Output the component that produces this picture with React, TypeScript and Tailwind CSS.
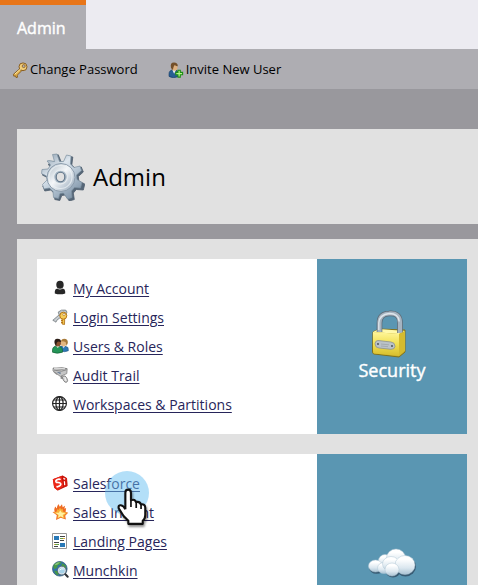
import type { ReactNode } from 'react';

function KeyIcon() {
  return (
    <svg width="16" height="16" viewBox="0 0 16 16" aria-hidden="true">
      <path d="M8.3 6.2 1.4 12.3l.4 1.9 1.7-.3.5 1.6 1.6-.3-.5-1.9 4.8-4.7z" fill="#e2b04c" stroke="#7a5015" strokeWidth=".8" />
      <ellipse cx="11" cy="4.8" rx="4" ry="3.9" fill="#f1cd78" stroke="#805317" strokeWidth=".9" />
      <circle cx="11.7" cy="4.1" r="1.5" fill="#aeadb2" stroke="#8b5d1c" strokeWidth=".8" />
      <path d="m3 12 6-5.3" stroke="#fff0b6" strokeWidth=".9" />
    </svg>
  );
}

function InviteIcon() {
  return (
    <svg width="16" height="16" viewBox="0 0 16 16" aria-hidden="true">
      <path d="M1 12q0-4 4.4-4.2 5 0 5.2 4.2v2.4Q5 17 1 14.4z" fill="#285f93" stroke="#183b63" strokeWidth=".6" />
      <path d="m4.4 8 1.7 3.8L8 8z" fill="#e8edf2" />
      <ellipse cx="6.5" cy="5" rx="3" ry="3.8" fill="#dfb17e" />
      <path d="M3 6Q1.8.6 6 .6q3.8 0 3.8 3.7Q8 4.3 6.7 3 5.5 4 4.8 8z" fill="#73502b" />
      <path d="M9 7.7h2.3v2.2h2.3v2.3h-2.3v2.4H9v-2.4H6.8V9.9H9z" transform="translate(1 .5)" fill="#b4f58a" stroke="#1d8f14" strokeWidth="1.1" />
    </svg>
  );
}

function GearIcon() {
  return (
    <svg width="44" height="48" viewBox="0 0 44 48" aria-hidden="true">
      <defs>
        <linearGradient id="gearFace" x1="0" y1="0" x2=".7" y2="1">
          <stop offset="0" stopColor="#8497a8" />
          <stop offset=".4" stopColor="#dde6ee" />
          <stop offset=".7" stopColor="#aebfce" />
          <stop offset="1" stopColor="#8296aa" />
        </linearGradient>
        <linearGradient id="gearDisc" x1="0" y1="0" x2="1" y2="1">
          <stop offset="0" stopColor="#adbac5" />
          <stop offset=".45" stopColor="#f5f7f9" />
          <stop offset="1" stopColor="#8ea2b5" />
        </linearGradient>
      </defs>
      <g strokeLinejoin="round">
        <path d="M12 1.5 16.5 1l3 7.5h4L26 2.200l5 1-1 8 3.500 3.500 6-1.500 2 5-5 4.500.500 4.500 6 3-1.500 6-7-.500-3 3.500 1 6.500-5 1.500-4-6-3.500.500-2 5-5-1-.500-6-3.500-3.500-6 1-2-5 5-4.500-.500-4-5-2.500L2 19l6-.500 2.500-4L6.500 11 9 7.500l5.500 1z" fill="#566778" stroke="#4f5e6e" strokeWidth=".8" transform="translate(.8 .8)" />
        <path d="M11.500 1.500 16 1l2.500 7.500h4L25.500 2l4.500 1-.500 8 3.500 3.500 6-1.500 1.500 4.500-5 4.500.500 4.500 5 3-1.500 5.500-6-.500-3 3.500.500 6.500-4.500 1.500-4-6-3.500.500-1.500 5-5-1-.500-6-3.500-3.500-5.500 1-1.500-4.500 4.500-4.500-.500-4-5-2.500.500-4 6-.500 2.500-4-3.500-4L8 7.500l5.500 1z" fill="url(#gearFace)" stroke="#7d90a1" strokeWidth=".7" />
      </g>
      <circle cx="20" cy="24.500" r="14" fill="url(#gearDisc)" stroke="#8b9cac" strokeWidth="1" />
      <circle cx="19.500" cy="24" r="11.500" fill="none" stroke="#eef3f6" strokeWidth="1.200" opacity=".7" />
      <circle cx="19.500" cy="24" r="6.800" fill="#a5b5c3" stroke="#e7ecef" strokeWidth="1.200" />
      <ellipse cx="19.500" cy="24" rx="4.300" ry="4.700" fill="#e1e1e1" stroke="#607487" strokeWidth="1.100" />
    </svg>
  );
}

function AccountIcon() {
  return (
    <svg width="16" height="16" viewBox="0 0 16 16" fill="#272727" aria-hidden="true">
      <ellipse cx="8" cy="4.8" rx="3.7" ry="4" />
      <path d="M2.800 11.400q0-2.300 2.400-2.900 2.700 1.800 5.600 0 2.400.6 2.400 2.900v2q-5.200 1.800-10.400 0z" />
    </svg>
  );
}

function LoginIcon() {
  return (
    <svg width="17" height="16" viewBox="0 0 17 16" aria-hidden="true">
      <path d="m.8 11.300 7-6 1.800 2.200-4.700 3.700-1 2-1-.8z" fill="#c8ced3" stroke="#70777b" strokeWidth=".8" />
      <path d="M6.200 3.100Q9 .2 13.700 1.100q2.600 1.800.1 4.300L10 8 7.200 6z" fill="#bdc5cb" stroke="#747b7e" strokeWidth=".8" />
      <path d="M10 9v6l2.500.500.200-6z" fill="#f2c54d" stroke="#a96912" strokeWidth=".8" />
      <circle cx="11.300" cy="6.700" r="3.500" fill="#f5cb58" stroke="#b67618" />
      <circle cx="12" cy="5.500" r="1.100" fill="#fff" stroke="#9d6b2e" strokeWidth=".6" />
      <path d="M9 11.500h2M9 13.500h2" stroke="#b67618" />
    </svg>
  );
}

function UsersIcon() {
  return (
    <svg width="17" height="16" viewBox="0 0 17 16" aria-hidden="true">
      <path d="M7.400 8.800q4.400-2.400 8.600.7l.4 3.200q-4 2-8 0z" fill="#2d78b6" stroke="#215783" strokeWidth=".6" />
      <path d="m10.500 7.500 1 2.700 1.800-2.500z" fill="#e5edf4" />
      <ellipse cx="11.500" cy="4.800" rx="3" ry="3.600" fill="#e3b782" />
      <path d="M9 3.500Q9.500.8 12 .8q4.100 0 3.800 4.100l-1.200 3-1-4-2.600-.6z" fill="#a77a3a" />
      <path d="M.5 12q.2-4 4.800-4.100Q10 8.200 10.500 12.300v1.900q-5.500 2-10 0z" fill="#249457" stroke="#126034" strokeWidth=".7" />
      <path d="m4.200 8 1.600 2.100L7.500 8z" fill="#eaf0e9" />
      <ellipse cx="5.900" cy="5" rx="3.100" ry="3.600" fill="#8b5230" />
      <path d="M2.600 5.300Q1.700.7 5.500.8 9 .8 9 4L6.100 3.400 4.700 4.800 4.200 8z" fill="#2a1c15" />
    </svg>
  );
}

function CameraIcon() {
  return (
    <svg width="17" height="16" viewBox="0 0 17 16" aria-hidden="true">
      <path d="M9.600 8.500v2.300l2.600.4" fill="none" stroke="#898989" strokeWidth="2" />
      <path d="m1 1.200 9.200-.6 5 1.100-.4 4.900-6.500 2.800L1 4z" fill="#c5c5c5" stroke="#777" strokeWidth=".7" />
      <path d="m1 1.200 9 .9 5-.4M2 3.100l7.600 1.100 4.800-1.400" fill="none" stroke="#777" strokeWidth=".8" />
      <path d="m2 1.400 8 .1 3 .2" stroke="#f4f4f4" strokeWidth=".8" />
      <path d="m1 4 4.300 2.200v2.100L2 5.700z" fill="#909090" />
      <path d="m4.400 4.800 4.400.6-.4 1.900z" fill="#5f7690" />
      <ellipse cx="13" cy="12.100" rx="2" ry="3.500" transform="rotate(-28 13 12)" fill="#d8d8d8" stroke="#777" strokeWidth=".8" />
      <path d="m13 10.100.8 3.500" stroke="#f7f7f7" strokeWidth=".8" />
    </svg>
  );
}

function GlobeIcon() {
  return (
    <svg width="16" height="16" viewBox="0 0 16 16" fill="none" stroke="#252525" strokeWidth="1.2" aria-hidden="true">
      <circle cx="7.500" cy="7.500" r="6.900" />
      <ellipse cx="7.500" cy="7.500" rx="3.600" ry="6.900" />
      <path d="M7.500.6v13.800M.6 7.500h13.800M1.800 4h11.400M1.800 11h11.400" />
    </svg>
  );
}

function SalesforceIcon() {
  return (
    <svg width="16" height="16" viewBox="0 0 16 16" aria-hidden="true">
      <path d="M.8 4.200 10.500.6l4.500 2.700.4 7.600-9.500 4.500-3.700-2.700z" fill="#b91109" />
      <path d="M.8 4.200 9.500 1l2 10.500-6 3.900-3.300-2.700z" fill="#ed2718" />
      <path d="M10.500.6 15 3.300l.4 7.600-3.400 1.400z" fill="#d21a0f" />
      <path d="M8.500 4.800Q7.500 3.500 5 4.700 2.900 6 4.400 7.400q3.700-.3 4.400 1.300.5 1.900-3.200 3.100l-1.200-.3" fill="none" stroke="#fff" strokeWidth="1.600" />
      <path d="m11.400 3.400 1.800.9M12.400 6.300l.3 3.800" stroke="#fff" strokeWidth="1.200" />
    </svg>
  );
}

function FlameIcon() {
  return (
    <svg width="17" height="16" viewBox="0 0 17 16" aria-hidden="true">
      <path d="M2.700 7.700Q1.500 4.200 3.800 2.500q0 1.700 1.100 2.100Q4.600 1.800 7 0q-.1 2 .9 2.800L10 .2l.7 3 2.300-1.500-.6 3 1.700-.6-.5 4 2.600.6-3 3 .7 3.800-5.200-1.800L4 15.900l.8-4.600L.5 8z" fill="#ef6b22" />
      <path d="M4.300 8.100 5.500 5l1.100 1.100L8 3.500l1.200 2.100 1.500-1 .2 3 4.300 1.100-3 2.700.5 3.200-4.100-1.500-3.400 1.600.7-3.600L1.600 8.400z" fill="#f9ae37" />
      <path d="m8.200 6.200 1.500 2.200 3.900.600-2.900 2.100.700 2.600-2.800-1.500-2.600 1.500.700-2.700-3.400-2.300 3.600.1z" fill="#fff1a1" />
    </svg>
  );
}

function PagesIcon() {
  return (
    <svg width="16" height="16" viewBox="0 0 16 16" aria-hidden="true">
      <path d="M.5.5h14v15H.5z" fill="#fff" stroke="#969696" />
      <path d="M2 3h5v4H2zM8 10h5v4H8z" fill="#2879b8" />
      <path d="M8 3.500h5M8 7.500h4M2 9.500h5M2 13.500h4" stroke="#444" />
      <path d="M8 5.500h3M3 11.500h4" stroke="#65a044" />
      <path d="M11 5.500h2M2 11.500h1" stroke="#e3a43b" />
    </svg>
  );
}

function MunchkinIcon() {
  return (
    <svg width="17" height="17" viewBox="0 0 17 17" aria-hidden="true">
      <circle cx="7.800" cy="7.800" r="7.300" fill="#2e70ad" stroke="#365d79" strokeWidth=".8" />
      <path d="M2 3.500Q5.300-.2 9.500 1.100L7.800 3.700l-2 .5-.5 2.200-2.600 1.900Q.4 6.200 2 3.500M10 2l3.500 2.300.8 3.200-3-.8-2-2M2.200 9.600l3.800.7 1.200 2-1.700 2.300q-3-1.700-3.300-5" fill="#479947" />
      <path d="M2.700 3.400Q5 .8 8 1.200L5.700 3.400l-2.100.8" fill="#a5d591" opacity=".7" />
      <path d="m12.200 12 3.500 3.800" stroke="#303438" strokeWidth="2" strokeLinecap="round" />
      <circle cx="9.800" cy="9.600" r="3.600" fill="#a6d2e8" stroke="#dce2e8" strokeWidth="1.300" />
      <circle cx="9.800" cy="9.600" r="4.400" fill="none" stroke="#53636d" strokeWidth=".8" />
      <path d="M7.600 9.200Q8.800 7.200 11.700 8" fill="none" stroke="#f5ffff" />
    </svg>
  );
}

function LockIcon() {
  return (
    <svg width="48" height="48" viewBox="0 0 48 48" aria-hidden="true">
      <defs>
        <linearGradient id="lockBody" x1="0" y1="0" x2="0" y2="1">
          <stop stopColor="#fff69b" />
          <stop offset=".5" stopColor="#f0df51" />
          <stop offset="1" stopColor="#d8bd2d" />
        </linearGradient>
      </defs>
      <path d="m5 22 6-3 26 1v22l-6 5-25-3q-1.500 0-1.500-3z" fill="#bca624" stroke="#81711c" />
      <path d="m5 22 26 2 6-3-26-2z" fill="#fff9aa" />
      <path d="M11.500 22V13Q11.500 4 21 3.500q11-1 11 9.500v10" fill="none" stroke="#5c6974" strokeWidth="5.600" />
      <path d="M11.500 22V13Q11.500 4 21 3.500q11-1 11 9.500v10" fill="none" stroke="#a5b3c0" strokeWidth="4.200" />
      <path d="M10.800 20v-7q.6-8.500 10.400-9.500 9.500 0 10 8" fill="none" stroke="#dfe6eb" strokeWidth="1.300" />
      <path d="m5 22 26 2v22L6 43.500q-1 0-1-3z" fill="url(#lockBody)" />
      <path d="m31 24 6-3v20l-6 5z" fill="#d5bb2f" />
      <path d="m10 30.500 13 1.500q4 .5 4 4.300-.4 3.200-4 3l-12-1.300q-4-.3-4-4.300.3-3.100 3-3.200" fill="#bac2c8" stroke="#8a9191" strokeWidth=".8" />
      <path d="m13 34 8 .8m-8 1.200 7 .7" stroke="#999fa3" strokeWidth=".7" />
      <circle cx="10" cy="34" r=".9" fill="#42484c" />
      <circle cx="24" cy="36" r=".9" fill="#42484c" />
    </svg>
  );
}

function CloudIcon() {
  return (
    <svg width="48" height="32" viewBox="0 0 48 32" aria-hidden="true">
      <defs>
        <linearGradient id="cloudPuff" x1="0" y1="0" x2="0" y2="1">
          <stop offset=".2" stopColor="#fff" />
          <stop offset=".65" stopColor="#dbe7ef" />
          <stop offset="1" stopColor="#a9c2d3" />
        </linearGradient>
      </defs>
      <g fill="#385b73" transform="translate(.5 1)">
        <ellipse cx="8" cy="18.500" rx="7.500" ry="6.300" /><circle cx="28" cy="10.500" r="9.500" /><ellipse cx="37" cy="17.500" rx="10.500" ry="10" /><ellipse cx="24.500" cy="21.500" rx="7.500" ry="7" />
      </g>
      <g fill="url(#cloudPuff)" stroke="#b0c6d5" strokeWidth=".5">
        <circle cx="17" cy="13" r="6.500" /><ellipse cx="28" cy="10" rx="9.500" ry="9" />
        <ellipse cx="7.500" cy="18" rx="7" ry="6" /><ellipse cx="16" cy="20" rx="6.500" ry="5.500" />
        <ellipse cx="23" cy="16" rx="8.500" ry="7.500" /><ellipse cx="37" cy="17" rx="10" ry="9.500" />
        <ellipse cx="24" cy="21.500" rx="7" ry="6.500" />
      </g>
    </svg>
  );
}

function Pointer() {
  return (
    <div className="pointer-events-none absolute left-8 top-0 z-10" aria-hidden="true">
      <div className="size-11 rounded-full bg-[#67bff1]/50" />
      <svg className="absolute left-3 top-4 drop-shadow-[1px_2px_1px_rgba(0,0,0,0.45)]" width="30" height="40" viewBox="0 0 28 38">
        <path d="M7.700 21.200V5.500q0-3 2.600-3t2.700 3v7q4-1.200 4.700 1.800 3.700-.9 4.700 2.200 4.100-.7 4.200 3.200v6.800q0 3.500-2.400 5.500V35H10.500v-3L6 27.500l-4.600-7.200q-.7-3.200 2-3 2.700.4 4.300 3.900" fill="#fff" stroke="#111" strokeWidth="2" strokeLinejoin="round" />
        <path d="M13 12v7m5-5v6m4.600-3v4" stroke="#111" strokeWidth="1.600" />
      </svg>
    </div>
  );
}

type Item = { label: string; icon: ReactNode; pointed?: boolean };

const securityItems: Item[] = [
  { label: 'My Account', icon: <AccountIcon /> },
  { label: 'Login Settings', icon: <LoginIcon /> },
  { label: 'Users & Roles', icon: <UsersIcon /> },
  { label: 'Audit Trail', icon: <CameraIcon /> },
  { label: 'Workspaces & Partitions', icon: <GlobeIcon /> },
];

const integrationItems: Item[] = [
  { label: 'Salesforce', icon: <SalesforceIcon />, pointed: true },
  { label: 'Sales Insight', icon: <FlameIcon /> },
  { label: 'Landing Pages', icon: <PagesIcon /> },
  { label: 'Munchkin', icon: <MunchkinIcon /> },
];

function Card({ items, children, className = '' }: { items: Item[]; children: ReactNode; className?: string }) {
  return (
    <section className={`flex bg-white ${className}`}>
      <ul className="min-w-0 flex-1 pb-4 pl-[15px] pt-[14px]">
        {items.map((item) => (
          <li key={item.label} className="flex h-[29px] items-center">
            <span className="w-[21px] shrink-0">{item.icon}</span>
            <span className="relative">
              <a href="#" className="text-[14px] leading-5 text-[#27255a] underline underline-offset-2">{item.label}</a>
              {item.pointed && <Pointer />}
            </span>
          </li>
        ))}
      </ul>
      <div className="flex w-[150px] shrink-0 flex-col items-center justify-center bg-[#5a96b2] pb-px text-white">{children}</div>
    </section>
  );
}

export default function App() {
  return (
    <div className="h-screen overflow-hidden bg-[#99989d] font-['Open_Sans','Noto_Sans',sans-serif] text-black">
      <header>
        <nav className="flex h-[49px] bg-[#ecebf1]">
          <a href="#" className="flex items-center border-t-5 border-[#e87518] bg-[#aeadb2] pl-[17px] pr-5 pt-0.5 text-[16px] font-medium text-white [-webkit-text-stroke:0.4px_white]">Admin</a>
        </nav>
        <div className="flex h-10 items-center gap-[30px] bg-[#aeadb2] px-3 pt-px text-[13px]">
          <button type="button" className="flex items-center gap-0.5"><KeyIcon />Change Password</button>
          <button type="button" className="flex items-center gap-0.5"><InviteIcon />Invite New User</button>
        </div>
      </header>
      <main className="flex flex-col gap-[15px] pl-[17px] pt-10">
        <div className="flex h-[95px] items-center gap-2 bg-[#e1e1e1] px-6">
          <GearIcon />
          <h1 className="text-[24px]">Admin</h1>
        </div>
        <div className="flex flex-col gap-5 bg-[#e1e1e1] py-5 pl-5 pr-[11px]">
          <Card items={securityItems}>
            <LockIcon />
            <h2 className="text-[18px] leading-6 font-medium [-webkit-text-stroke:0.4px_white]">Security</h2>
          </Card>
          <Card items={integrationItems} className="min-h-[245px]">
            <CloudIcon />
            <div className="h-6" />
          </Card>
        </div>
      </main>
    </div>
  );
}
